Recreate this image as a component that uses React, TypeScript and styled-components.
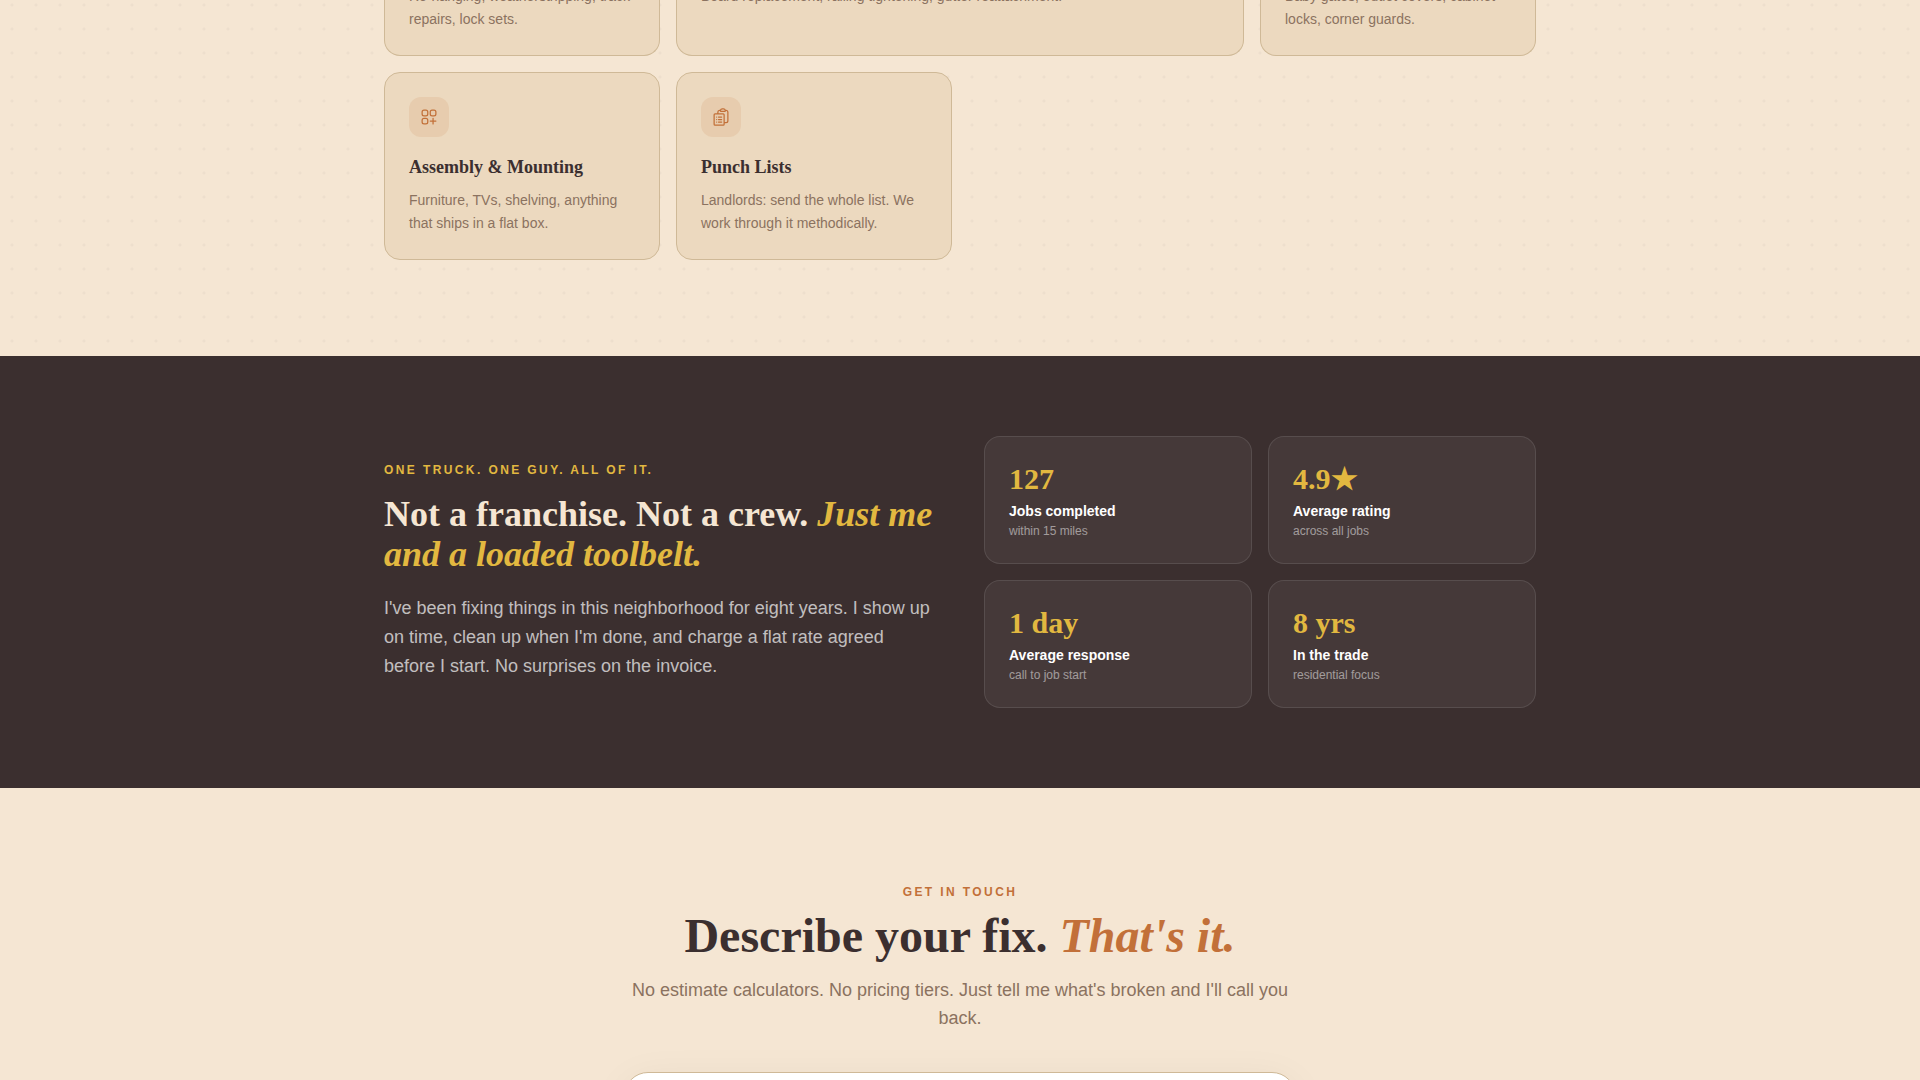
import React from "react";
import styled, { createGlobalStyle } from "styled-components";
import { HiOutlineClipboardDocumentList, HiOutlineSquaresPlus } from "react-icons/hi2";
import type { IconType } from "react-icons";

const color = {
  cream: "#f5e6d3",
  sand: "#ecd9bf",
  sandEdge: "#cfb997",
  ink: "#3b2f2f",
  brown: "#8b7260",
  rust: "#c27039",
  gold: "#e2b840",
};

const serif = `"Liberation Serif", "Times New Roman", serif`;
const sans = `"Liberation Sans", Arial, sans-serif`;

const GlobalStyle = createGlobalStyle`
  *, *::before, *::after { box-sizing: border-box; }
  body {
    margin: 0;
    background: ${color.cream};
    color: ${color.ink};
    font-family: ${sans};
  }
  h2, h3, p, dl, dt, dd { margin: 0; }
`;

const Page = styled.main`
  height: 100vh;
  overflow: hidden;
`;

const Container = styled.div`
  width: 100%;
  max-width: 1200px;
  margin: 0 auto;
  padding: 0 24px;
`;

const Services = styled.section`
  margin-top: -15px;
  padding-bottom: 96px;
  background-color: ${color.cream};
  background-image: radial-gradient(circle, rgba(59, 47, 47, 0.04) 1px, transparent 2px);
  background-size: 24px 24px;
  background-position: 0 8px;
`;

const ServiceGrid = styled.div`
  display: grid;
  grid-template-columns: repeat(4, 1fr);
  gap: 16px;
`;

const ServiceCard = styled.article<{ $span?: number; $continued?: boolean }>`
  grid-column: span ${(p) => p.$span ?? 1};
  padding: ${(p) => (p.$continued ? "0 24px 24px" : "24px")};
  background: ${color.sand};
  border: 1px solid ${color.sandEdge};
  border-top-width: ${(p) => (p.$continued ? "0" : "1px")};
  border-radius: ${(p) => (p.$continued ? "0 0 16px 16px" : "16px")};
`;

const IconTile = styled.div`
  display: grid;
  place-items: center;
  width: 40px;
  height: 40px;
  margin-bottom: 16px;
  border-radius: 12px;
  background: rgba(194, 112, 57, 0.12);
  color: ${color.rust};
`;

const ServiceTitle = styled.h3`
  margin-bottom: 8px;
  font: 700 18px/28px ${serif};
`;

const ServiceText = styled.p`
  color: ${color.brown};
  font-size: 14px;
  line-height: 23px;
`;

const About = styled.section`
  padding: 80px 0;
  background: ${color.ink};
`;

const AboutGrid = styled.div`
  display: grid;
  grid-template-columns: 1fr 1fr;
  align-items: center;
  gap: 48px;
`;

const Eyebrow = styled.p<{ $tone: string; $gap: number }>`
  margin-bottom: ${(p) => p.$gap}px;
  color: ${(p) => p.$tone};
  font-size: 12px;
  font-weight: 700;
  line-height: 16px;
  letter-spacing: 0.2em;
  text-transform: uppercase;
`;

const AboutHeading = styled.h2`
  margin-bottom: 20px;
  color: ${color.cream};
  font: 700 36px/40px ${serif};

  em { color: ${color.gold}; }
`;

const AboutText = styled.p`
  padding-bottom: 2px;
  color: rgba(255, 255, 255, 0.7);
  font-size: 18px;
  line-height: 29px;
`;

const StatGrid = styled.dl`
  display: grid;
  grid-template-columns: 1fr 1fr;
  gap: 16px;
`;

const StatCard = styled.div`
  display: flex;
  flex-direction: column;
  padding: 24px;
  border: 1px solid rgba(255, 255, 255, 0.1);
  border-radius: 16px;
  background: rgba(255, 255, 255, 0.05);
`;

const StatValue = styled.dd`
  order: -1;
  margin-bottom: 4px;
  color: ${color.gold};
  font: 700 30px/36px ${serif};
`;

const StatLabel = styled.dt`
  color: #fff;
  font-size: 14px;
  font-weight: 700;
  line-height: 20px;
`;

const StatNote = styled.dd`
  margin-top: 2px;
  color: rgba(255, 255, 255, 0.5);
  font-size: 12px;
  line-height: 16px;
`;

const Contact = styled.section`
  padding: 96px 24px;
`;

const ContactInner = styled.div`
  width: 100%;
  max-width: 672px;
  margin: 0 auto;
`;

const ContactHeader = styled.header`
  margin-bottom: 40px;
  text-align: center;
`;

const ContactHeading = styled.h2`
  margin-bottom: 16px;
  font: 700 48px/48px ${serif};

  em { color: ${color.rust}; }
`;

const ContactText = styled.p`
  color: ${color.brown};
  font-size: 18px;
  line-height: 28px;
`;

const ContactCard = styled.div`
  min-height: 480px;
  border: 1px solid ${color.sandEdge};
  border-radius: 24px;
  background: #fff;
  box-shadow: 0 8px 40px rgba(59, 47, 47, 0.06);
`;

type Service = { icon?: IconType; title?: string; text: string; span?: number };

const services: Service[] = [
  { text: "Re-hanging, weatherstripping, track repairs, lock sets." },
  { text: "Board replacement, railing tightening, gutter reattachment.", span: 2 },
  { text: "Baby gates, outlet covers, cabinet locks, corner guards." },
  {
    icon: HiOutlineSquaresPlus,
    title: "Assembly & Mounting",
    text: "Furniture, TVs, shelving, anything that ships in a flat box.",
  },
  {
    icon: HiOutlineClipboardDocumentList,
    title: "Punch Lists",
    text: "Landlords: send the whole list. We work through it methodically.",
  },
];

const stats = [
  { value: "127", label: "Jobs completed", note: "within 15 miles" },
  { value: "4.9★", label: "Average rating", note: "across all jobs" },
  { value: "1 day", label: "Average response", note: "call to job start" },
  { value: "8 yrs", label: "In the trade", note: "residential focus" },
];

export default function App() {
  return (
    <Page>
      <GlobalStyle />
      <Services>
        <Container>
          <ServiceGrid>
            {services.map(({ icon: Icon, title, text, span }) => (
              <ServiceCard key={text} $span={span} $continued={!title}>
                {Icon && (
                  <IconTile>
                    <Icon size={20} aria-hidden />
                  </IconTile>
                )}
                {title && <ServiceTitle>{title}</ServiceTitle>}
                <ServiceText>{text}</ServiceText>
              </ServiceCard>
            ))}
          </ServiceGrid>
        </Container>
      </Services>

      <About>
        <Container>
          <AboutGrid>
            <div>
              <Eyebrow $tone={color.gold} $gap={16}>
                One truck. One guy. All of it.
              </Eyebrow>
              <AboutHeading>
                Not a franchise. Not a crew. <em>Just me and a loaded toolbelt.</em>
              </AboutHeading>
              <AboutText>
                I've been fixing things in this neighborhood for eight years. I show up on time,
                clean up when I'm done, and charge a flat rate agreed before I start. No surprises
                on the invoice.
              </AboutText>
            </div>
            <StatGrid>
              {stats.map((s) => (
                <StatCard key={s.label}>
                  <StatLabel>{s.label}</StatLabel>
                  <StatValue>{s.value}</StatValue>
                  <StatNote>{s.note}</StatNote>
                </StatCard>
              ))}
            </StatGrid>
          </AboutGrid>
        </Container>
      </About>

      <Contact>
        <ContactInner>
          <ContactHeader>
            <Eyebrow $tone={color.rust} $gap={12}>
              Get in touch
            </Eyebrow>
            <ContactHeading>
              Describe your fix. <em>That's it.</em>
            </ContactHeading>
            <ContactText>
              No estimate calculators. No pricing tiers. Just tell me what's broken and I'll call
              you back.
            </ContactText>
          </ContactHeader>
          <ContactCard />
        </ContactInner>
      </Contact>
    </Page>
  );
}
